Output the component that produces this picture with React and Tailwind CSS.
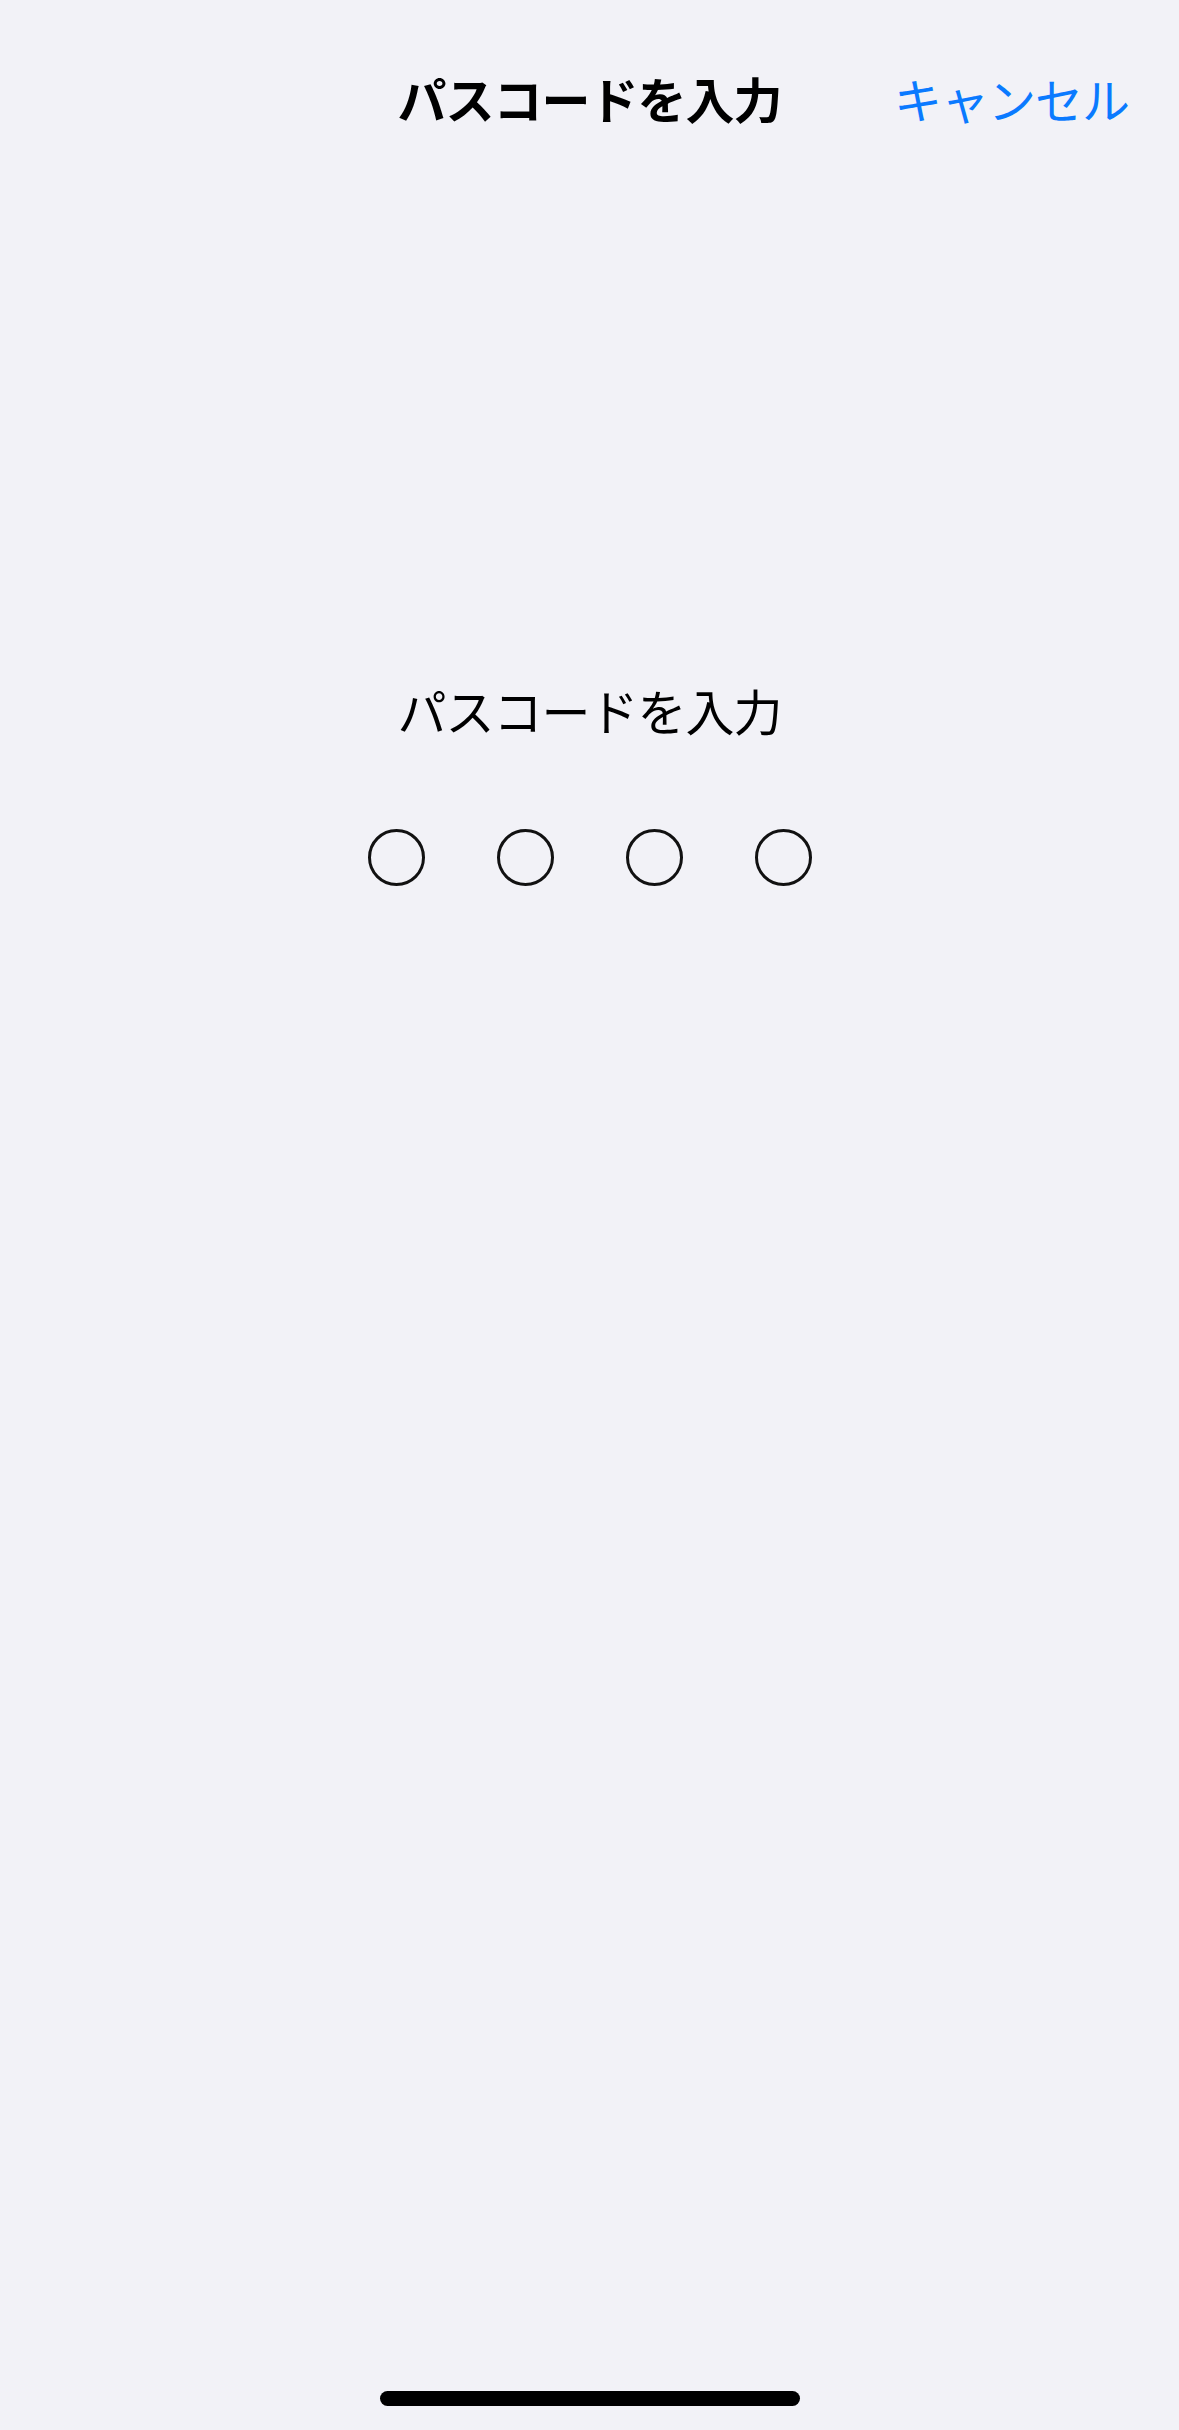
export default function App() {
  const font = { fontFamily: '"Noto Sans CJK JP", "Noto Sans", sans-serif' };
  return (
    <div
      className="h-[2430px] w-full bg-[#F2F2F7] flex flex-col items-center text-black"
      style={font}
    >
      <div className="w-full h-[196px] grid grid-cols-[1fr_auto_1fr] items-center">
        <div />
        <div className="text-[49px] leading-[60px] font-bold tracking-[-1px]">パスコードを入力</div>
        <div className="justify-self-end pr-[50px] text-[48px] leading-[60px] text-[#0A7AFF] tracking-[-1px]">
          キャンセル
        </div>
      </div>
      <div className="mt-[484px] text-[49px] leading-[60px] tracking-[-1px]">パスコードを入力</div>
      <div className="mt-[89px] flex gap-[72px]">
        <div className="w-[57px] h-[57px] rounded-full border-[3px] border-[#111]" />
        <div className="w-[57px] h-[57px] rounded-full border-[3px] border-[#111]" />
        <div className="w-[57px] h-[57px] rounded-full border-[3px] border-[#111]" />
        <div className="w-[57px] h-[57px] rounded-full border-[3px] border-[#111]" />
      </div>
      <div className="flex-1" />
      <div className="mb-[24px] w-[420px] h-[15px] rounded-full bg-black" />
    </div>
  );
}
